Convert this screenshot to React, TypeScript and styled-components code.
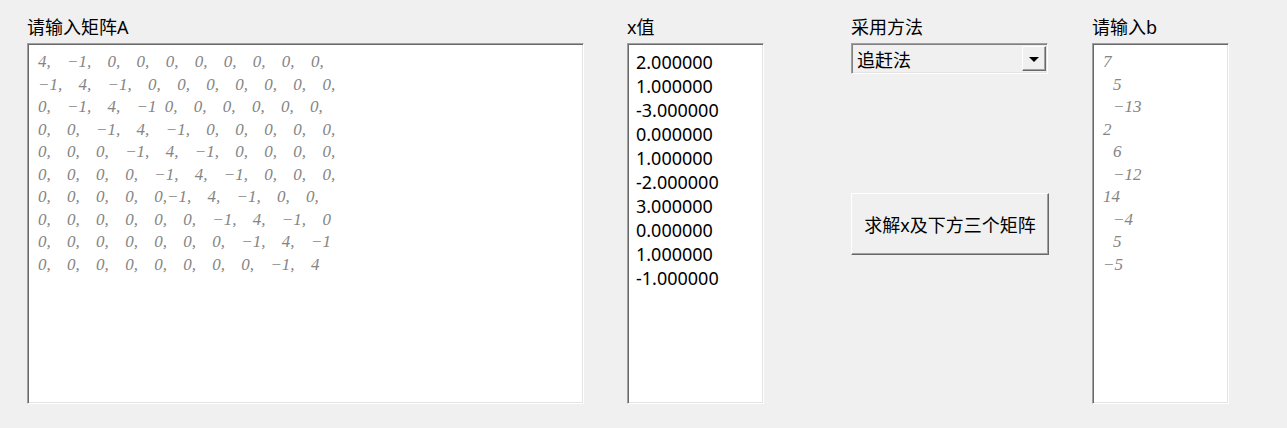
import React from "react";
import styled, { createGlobalStyle } from "styled-components";

const GlobalStyle = createGlobalStyle`
  html, body { margin: 0; padding: 0; background: #f0f0f0; }
  body { font-family: "Noto Sans", "Noto Sans CJK SC", sans-serif; }
`;

const Page = styled.div`
  display: flex;
  align-items: flex-start;
  padding: 14px 0 0 27px;
  width: 1287px;
  height: 428px;
  box-sizing: border-box;
  background: #f0f0f0;
`;

const Column = styled.div<{ $width: number; $gap: number }>`
  display: flex;
  flex-direction: column;
  width: ${(p) => p.$width}px;
  margin-right: ${(p) => p.$gap}px;
  flex-shrink: 0;
`;

const Label = styled.div`
  height: 26px;
  line-height: 26px;
  margin-bottom: 3px;
  font-size: 18px;
  color: #000;
  white-space: nowrap;
`;

const EditBox = styled.div<{ $height: number }>`
  box-sizing: border-box;
  height: ${(p) => p.$height}px;
  background: #fff;
  border-style: solid;
  border-width: 1px;
  border-color: #a0a0a0 #ffffff #ffffff #a0a0a0;
  box-shadow: inset 1px 1px 0 #696969, inset -1px -1px 0 #e3e3e3;
  overflow: hidden;
`;

const MathText = styled.div<{ $spacing: number }>`
  padding: 7px 0 0 10px;
  font-family: "Liberation Serif", "DejaVu Serif", serif;
  font-style: italic;
  font-size: 17px;
  line-height: 22.5px;
  color: #858585;
  white-space: pre;
  word-spacing: ${(p) => p.$spacing}px;
`;

const MathLine = styled.div<{ $indent?: boolean }>`
  padding-left: ${(p) => (p.$indent ? 10 : 0)}px;
`;

const ValueText = styled.div`
  padding: 6px 0 0 8px;
  font-size: 18px;
  line-height: 24px;
  color: #000;
  white-space: pre;
`;

const Combo = styled.div`
  box-sizing: border-box;
  height: 31px;
  display: flex;
  align-items: center;
  justify-content: space-between;
  background: #f0f0f0;
  border-style: solid;
  border-width: 1px;
  border-color: #a0a0a0 #ffffff #ffffff #a0a0a0;
  box-shadow: inset 1px 1px 0 #808080, inset -1px -1px 0 #e3e3e3;
  padding: 0 1px 0 5px;
  font-size: 18px;
  color: #000;
`;

const ArrowButton = styled.div`
  box-sizing: border-box;
  width: 24px;
  height: 25px;
  display: flex;
  align-items: center;
  justify-content: center;
  background: #f0f0f0;
  border-style: solid;
  border-width: 1px;
  border-color: #ffffff #696969 #696969 #ffffff;
  box-shadow: inset -1px -1px 0 #a0a0a0;
`;

const Triangle = styled.div`
  width: 0;
  height: 0;
  border-left: 5px solid transparent;
  border-right: 5px solid transparent;
  border-top: 5px solid #000;
  margin-top: 1px;
`;

const ActionButton = styled.button`
  box-sizing: border-box;
  margin-top: 119px;
  width: 198px;
  height: 62px;
  background: #f0f0f0;
  border-style: solid;
  border-width: 1px;
  border-color: #ffffff #696969 #696969 #ffffff;
  box-shadow: inset -1px -1px 0 #a0a0a0;
  font-family: "Noto Sans", "Noto Sans CJK SC", sans-serif;
  font-size: 18px;
  letter-spacing: 0;
  color: #000;
  padding: 0;
  cursor: default;
`;

const matrixRows = [
  "4,  −1,  0,  0,  0,  0,  0,  0,  0,  0,",
  "−1,  4,  −1,  0,  0,  0,  0,  0,  0,  0,",
  "0,  −1,  4,  −1 0,  0,  0,  0,  0,  0,",
  "0,  0,  −1,  4,  −1,  0,  0,  0,  0,  0,",
  "0,  0,  0,  −1,  4,  −1,  0,  0,  0,  0,",
  "0,  0,  0,  0,  −1,  4,  −1,  0,  0,  0,",
  "0,  0,  0,  0,  0,−1,  4,  −1,  0,  0,",
  "0,  0,  0,  0,  0,  0,  −1,  4,  −1,  0",
  "0,  0,  0,  0,  0,  0,  0,  −1,  4,  −1",
  "0,  0,  0,  0,  0,  0,  0,  0,  −1,  4",
];

const xValues = [
  "2.000000",
  "1.000000",
  "-3.000000",
  "0.000000",
  "1.000000",
  "-2.000000",
  "3.000000",
  "0.000000",
  "1.000000",
  "-1.000000",
];

const bValues: { text: string; indent: boolean }[] = [
  { text: "7", indent: false },
  { text: "5", indent: true },
  { text: "−13", indent: true },
  { text: "2", indent: false },
  { text: "6", indent: true },
  { text: "−12", indent: true },
  { text: "14", indent: false },
  { text: "−4", indent: true },
  { text: "5", indent: true },
  { text: "−5", indent: false },
];

export default function App() {
  return (
    <>
      <GlobalStyle />
      <Page>
        <Column $width={557} $gap={43}>
          <Label>请输入矩阵A</Label>
          <EditBox $height={361}>
            <MathText $spacing={3.9}>
              {matrixRows.map((r, i) => (
                <MathLine key={i}>{r}</MathLine>
              ))}
            </MathText>
          </EditBox>
        </Column>
        <Column $width={137} $gap={87}>
          <Label>x值</Label>
          <EditBox $height={361}>
            <ValueText>
              {xValues.map((v, i) => (
                <div key={i}>{v}</div>
              ))}
            </ValueText>
          </EditBox>
        </Column>
        <Column $width={197} $gap={44}>
          <Label>采用方法</Label>
          <Combo>
            <span>追赶法</span>
            <ArrowButton>
              <Triangle />
            </ArrowButton>
          </Combo>
          <ActionButton>求解x及下方三个矩阵</ActionButton>
        </Column>
        <Column $width={137} $gap={0}>
          <Label>请输入b</Label>
          <EditBox $height={361}>
            <MathText $spacing={0}>
              {bValues.map((b, i) => (
                <MathLine key={i} $indent={b.indent}>
                  {b.text}
                </MathLine>
              ))}
            </MathText>
          </EditBox>
        </Column>
      </Page>
    </>
  );
}
